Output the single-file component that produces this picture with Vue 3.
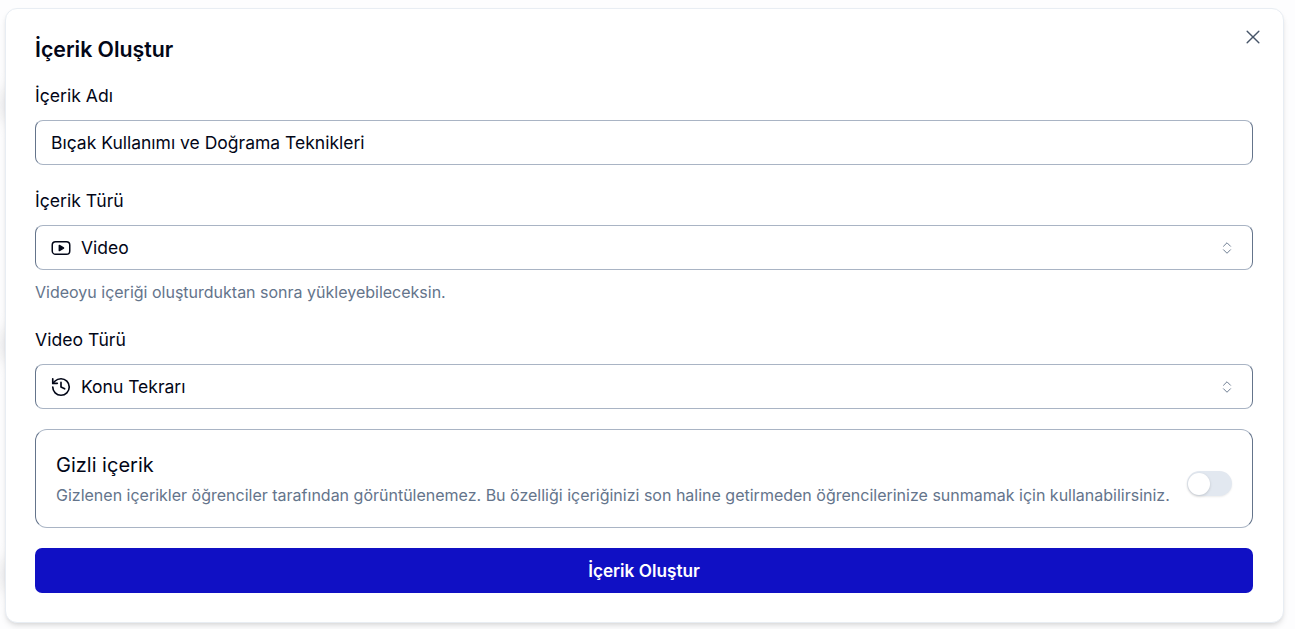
<template>
  <div class="page">
    <div class="blur-strip strip-one"></div>
    <div class="blur-strip strip-two"></div>
    <div class="blur-strip strip-three"></div>
    <section class="dialog">
      <button class="close" type="button" aria-label="Kapat">
        <svg width="20" height="20" viewBox="0 0 24 24" fill="none" stroke="currentColor" stroke-width="1.7" stroke-linecap="round" stroke-linejoin="round">
          <path d="M19 5 5 19" />
          <path d="m5 5 14 14" />
        </svg>
      </button>

      <h2 class="title">İçerik Oluştur</h2>

      <div class="field first">
        <label class="label">İçerik Adı</label>
        <input class="input" type="text" v-model="name" />
      </div>

      <div class="field">
        <label class="label">İçerik Türü</label>
        <div class="select">
          <svg class="icon" width="20" height="20" viewBox="0 0 24 24" fill="none" stroke="currentColor" stroke-width="1.8" stroke-linecap="round" stroke-linejoin="round">
            <rect x="1.5" y="4.5" width="21" height="15" rx="4" />
            <path d="m10 9 5 3-5 3z" fill="currentColor" />
          </svg>
          <span>Video</span>
          <svg class="chevrons" width="14" height="14" viewBox="0 0 24 24" fill="none" stroke="currentColor" stroke-width="1.6" stroke-linecap="round" stroke-linejoin="round">
            <path d="m6 15 6 6 6-6" />
            <path d="m6 9 6-6 6 6" />
          </svg>
        </div>
        <p class="hint">Videoyu içeriği oluşturduktan sonra yükleyebileceksin.</p>
      </div>

      <div class="field third">
        <label class="label">Video Türü</label>
        <div class="select">
          <svg class="icon icon-history" width="22" height="22" viewBox="0 0 24 24" fill="none" stroke="currentColor" stroke-width="1.8" stroke-linecap="round" stroke-linejoin="round">
            <path d="M3 12a9 9 0 1 0 9-9 9.75 9.75 0 0 0-6.74 2.74L3 8" />
            <path d="M3 3v5h5" />
            <path d="M12 7v5l4 2" />
          </svg>
          <span>Konu Tekrarı</span>
          <svg class="chevrons" width="14" height="14" viewBox="0 0 24 24" fill="none" stroke="currentColor" stroke-width="1.6" stroke-linecap="round" stroke-linejoin="round">
            <path d="m6 15 6 6 6-6" />
            <path d="m6 9 6-6 6 6" />
          </svg>
        </div>
      </div>

      <div class="hidden-card">
        <div class="hidden-text">
          <div class="hidden-title">Gizli içerik</div>
          <p class="hidden-desc">Gizlenen içerikler öğrenciler tarafından görüntülenemez. Bu özelliği içeriğinizi son haline getirmeden öğrencilerinize sunmamak için kullanabilirsiniz.</p>
        </div>
        <button class="switch" type="button" :class="{ on: hidden }" @click="hidden = !hidden">
          <span class="thumb"></span>
        </button>
      </div>

      <button class="submit" type="button">İçerik Oluştur</button>
    </section>
  </div>
</template>

<script setup>
import { ref } from 'vue'

const name = ref('Bıçak Kullanımı ve Doğrama Teknikleri')
const hidden = ref(false)
</script>

<style>
html, body {
  margin: 0;
  padding: 0;
  background: #fff;
}
</style>

<style scoped>
.page {
  position: relative;
  height: 629px;
  overflow: hidden;
  box-sizing: border-box;
  padding: 8px 11px 7px 5px;
  background: #fdfdfe;
  font-family: Inter, "Noto Sans", sans-serif;
  color: #020617;
}

.blur-strip {
  position: absolute;
  left: 0;
  width: 20px;
  height: 30px;
  background: #e9e9eb;
  filter: blur(8px);
}

.strip-one { top: 90px; }
.strip-two { top: 330px; }
.strip-three { top: 560px; }

.dialog {
  position: relative;
  box-sizing: border-box;
  height: 615px;
  padding: 28px 30px 0 29px;
  background: #fff;
  border: 1px solid #e8edf3;
  border-radius: 12px;
  box-shadow: 0 4px 6px -1px rgba(0, 0, 0, 0.1), 0 2px 4px -2px rgba(0, 0, 0, 0.1);
}

.close {
  position: absolute;
  top: 18px;
  right: 20px;
  padding: 0;
  display: flex;
  border: none;
  background: none;
  color: #475569;
}

.title {
  margin: 0;
  font-size: 21.3px;
  line-height: 24px;
  font-weight: 600;
}

.field {
  margin-top: 24px;
}

.field.first {
  margin-top: 23px;
}

.field.third {
  margin-top: 26px;
}

.label {
  display: block;
  font-size: 17.6px;
  line-height: 24px;
  font-weight: 400;
  margin-bottom: 12px;
}

.input,
.select {
  box-sizing: border-box;
  width: 100%;
  height: 45px;
  border: 1px solid #64748b;
  border-top-color: #a9b4c4;
  border-bottom-color: #a9b4c4;
  border-radius: 8px;
  background: #fff;
  font-family: inherit;
  font-size: 17.5px;
  color: #020617;
}

.input {
  display: block;
  padding: 0 15px;
  outline: none;
}

.select {
  display: flex;
  align-items: center;
  gap: 10px;
  padding: 0 18px 0 15px;
}

.icon {
  flex: none;
}

.icon-history {
  margin: 0 -1px;
}

.chevrons {
  flex: none;
  margin-left: auto;
  color: #64748b;
}

.hint {
  margin: 12px 0 0;
  font-size: 16px;
  line-height: 20px;
  color: #64748b;
}

.hidden-card {
  box-sizing: border-box;
  height: 99px;
  margin-top: 20px;
  padding: 1px 20px 0;
  display: flex;
  align-items: center;
  justify-content: space-between;
  border: 1px solid #64748b;
  border-top-color: #a9b4c4;
  border-bottom-color: #a9b4c4;
  border-radius: 12px;
}

.hidden-title {
  font-size: 20px;
  line-height: 28px;
  font-weight: 400;
}

.hidden-desc {
  margin: 4px 0 0;
  font-size: 16px;
  line-height: 24px;
  color: #64748b;
}

.switch {
  flex: none;
  width: 45px;
  height: 25px;
  margin-top: 9px;
  padding: 0 1px;
  display: flex;
  align-items: center;
  border: none;
  border-radius: 13px;
  background: #e2e8f0;
  box-shadow: 0 1px 2px rgba(0, 0, 0, 0.08);
}

.thumb {
  width: 22px;
  height: 22px;
  border-radius: 50%;
  background: #fff;
  box-shadow: 0 1px 3px rgba(0, 0, 0, 0.15);
}

.submit {
  display: block;
  width: 100%;
  height: 45px;
  margin-top: 20px;
  border: none;
  border-radius: 7px;
  background: #1010c4;
  color: #fff;
  font-family: inherit;
  font-size: 17.2px;
  font-weight: 600;
}
</style>
